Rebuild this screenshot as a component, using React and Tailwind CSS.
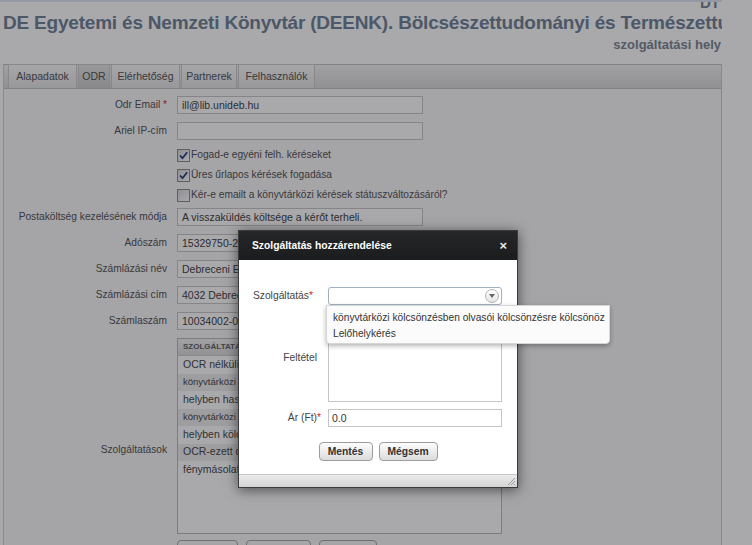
import React from 'react';

const tabs = [
  { label: 'Alapadatok', w: 'w-[69px]' },
  { label: 'ODR', w: 'w-[32px]', active: true },
  { label: 'Elérhetőség', w: 'w-[69px]' },
  { label: 'Partnerek', w: 'w-[56px]' },
  { label: 'Felhasználók', w: 'w-[77px]' },
];

const checks = [
  { label: 'Fogad-e egyéni felh. kéréseket', checked: true },
  { label: 'Üres űrlapos kérések fogadása', checked: true },
  { label: 'Kér-e emailt a könyvtárközi kérések státuszváltozásáról?', checked: false },
];

const billing = [
  { label: 'Adószám', value: '15329750-2-09' },
  { label: 'Számlázási név', value: 'Debreceni Egyetem Egyetemi és Nemzeti Könyvtár' },
  { label: 'Számlázási cím', value: '4032 Debrecen, Egyetem tér 1.' },
  { label: 'Számlaszám', value: '10034002-00282871-00000000' },
];

const services = [
  'OCR nélküli digitalizálás',
  'könyvtárközi kölcsönzés',
  'helyben használat',
  'könyvtárközi másolat',
  'helyben kölcsönzés',
  'OCR-ezett digitalizálás',
  'fénymásolat',
];

const Field = ({ label, required, value, className = 'mb-[8px]' }) => (
  <div className={`flex items-center h-[18px] ${className}`}>
    <div className="w-[163px] text-right text-[10.2px] text-[#555] whitespace-nowrap">
      {label}
      {required && <span className="text-[#d42a2a]"> *</span>}
    </div>
    <div className="ml-[10px] w-[246px] h-[18px] border border-[#c9c9c9] bg-white px-[4px] text-[10.5px] leading-[16px] text-[#444] overflow-hidden whitespace-nowrap">
      {value}
    </div>
  </div>
);

const CheckBox = ({ checked }) => (
  <span className="w-[13px] h-[13px] shrink-0 border border-[#8e8f90] bg-gradient-to-br from-[#d8d9db] to-white flex items-center justify-center">
    {checked && (
      <svg width="11" height="11" viewBox="0 0 11 11">
        <path d="M2 5.5 L4.5 8.2 L9.2 2.2" fill="none" stroke="#28457d" strokeWidth="1.8" />
      </svg>
    )}
  </span>
);

export default function App() {
  return (
    <div className="relative w-[752px] h-[545px] overflow-hidden bg-white font-['Liberation_Sans',Arial,sans-serif]">
      <div className="w-[722px] h-full border-t-2 border-[#dce7f1] overflow-hidden">
        {/* Header */}
        <div className="-mt-[7px] h-[16px] text-right text-[15px] leading-[16px] font-bold text-[#768899] pr-[2px]">DT</div>
        <div className="pl-[3px] text-[19px] leading-[24px] tracking-[-0.2px] font-bold text-[#738597] whitespace-nowrap">
          DE Egyetemi és Nemzeti Könyvtár (DEENK). Bölcsészettudományi és Természettudományi Kari Könyvtár
        </div>
        <div className="mt-[2px] text-right text-[13px] leading-[16px] font-bold text-[#7d8894] pr-[1px]">szolgáltatási hely</div>

        {/* Panel */}
        <div className="mt-[11px] ml-[3px] h-[500px] border-l border-r border-[#cfcfcf] bg-[#f9f9f9]">
          <div className="h-[25px] flex items-end gap-[1px] pl-[4px] border-t border-b border-[#c4c4c4] bg-gradient-to-b from-[#f4f4f4] to-[#dadada]">
            {tabs.map((t) => (
              <div
                key={t.label}
                className={`${t.w} h-[24px] flex items-center justify-center text-[10.5px] text-[#555] border-l border-r border-t border-[#cdcdcd] ${
                  t.active ? 'bg-gradient-to-b from-[#e6e6e6] to-[#cfcfcf]' : 'bg-gradient-to-b from-[#fbfbfb] to-[#e6e6e6]'
                }`}
              >
                {t.label}
              </div>
            ))}
          </div>

          <div className="pt-[7px]">
            <Field label="Odr Email" required value="ill@lib.unideb.hu" />
            <Field label="Ariel IP-cím" value="" className="mb-[5px]" />
            {checks.map((c) => (
              <div key={c.label} className="h-[20px] flex items-center pl-[173px] text-[10.2px] text-[#555]">
                <CheckBox checked={c.checked} />
                <span className="ml-[1px] whitespace-nowrap">{c.label}</span>
              </div>
            ))}
            <Field label="Postaköltség kezelésének módja" value="A visszaküldés költsége a kérőt terheli." className="mt-[3px] mb-[8px]" />
            {billing.map((b) => (
              <Field key={b.label} label={b.label} value={b.value} />
            ))}

            <div className="flex items-center">
              <div className="w-[163px] text-right text-[10.2px] text-[#555]">Szolgáltatások</div>
              <div className="ml-[10px]">
                <div className="w-[325px] h-[196px] border border-[#bdbdbd] bg-white overflow-hidden">
                  <div className="h-[17px] flex items-center px-[5px] text-[8px] font-bold text-[#666] bg-gradient-to-b from-[#f3f3f3] to-[#dedede] border-b border-[#cfcfcf]">
                    <span className="w-[200px]">SZOLGÁLTATÁS</span>
                    <span className="w-[70px]">FELTÉTEL</span>
                    <span>ÁR</span>
                  </div>
                  {services.map((s, i) => (
                    <div
                      key={i}
                      className={`h-[17.5px] flex items-center px-[5px] whitespace-nowrap text-[#4a4a4a] ${
                        s.startsWith('könyvtárközi') ? 'text-[9.5px]' : 'text-[10.5px]'
                      } ${i % 2 === 1 ? 'bg-[#eeeeee]' : 'bg-white'}`}
                    >
                      {s}
                    </div>
                  ))}
                </div>
                <div className="mt-[6px] flex gap-[8px]">
                  {['Hozzáadás', 'Módosítás', 'Törlés'].map((b, i) => (
                    <div
                      key={b}
                      className={`${i === 0 ? 'w-[61px]' : i === 1 ? 'w-[65px]' : 'w-[58px]'} h-[22px] rounded-[4px] border border-[#a8a8a8] bg-gradient-to-b from-[#fdfdfd] to-[#e0e0e0] flex items-center justify-center text-[10.5px] font-bold text-[#444]`}
                    >
                      {b}
                    </div>
                  ))}
                </div>
              </div>
            </div>
          </div>
        </div>
      </div>

      {/* Dim overlay */}
      <div className="absolute inset-0 bg-[rgba(3,4,12,0.34)]" />

      {/* Modal */}
      <div className="absolute left-[238px] top-[230px] w-[280px] h-[258px] flex flex-col bg-white border border-[#3a3b3d] shadow-[0_2px_12px_rgba(0,0,0,0.55)]">
        <div className="h-[29px] flex items-center justify-between pl-[13px] pr-[10px] bg-gradient-to-b from-[#262729] to-[#1b1c1e]">
          <span className="text-[10.3px] font-bold text-white">Szolgáltatás hozzárendelése</span>
          <span className="text-[13px] font-bold text-[#e8e8e8] leading-none">×</span>
        </div>

        <div className="flex-1 pt-[27px]">
          <div className="flex items-center h-[18px]">
            <div className="w-[74px] text-right text-[10.3px] text-[#444] whitespace-nowrap">
              Szolgáltatás<span className="text-[#d42a2a]">*</span>
            </div>
            <div className="ml-[15px] w-[174px] h-[18px] rounded-[3px] border border-[#9fb0c2] bg-white flex items-center justify-end pr-[2px]">
              <span className="w-[14px] h-[14px] rounded-full border border-[#b4b4b4] bg-gradient-to-b from-white to-[#e4e4e4] flex items-center justify-center">
                <svg width="6" height="4" viewBox="0 0 6 4">
                  <path d="M0 0 L6 0 L3 4 Z" fill="#666" />
                </svg>
              </span>
            </div>
          </div>

          <div className="flex items-center mt-[9px]">
            <div className="w-[78px] text-right text-[10.3px] text-[#444]">Feltétel</div>
            <div className="ml-[11px] w-[174px] h-[88px] border border-[#c4c4c4] bg-white" />
          </div>

          <div className="flex items-center h-[18px] mt-[7px]">
            <div className="w-[82px] text-right text-[10.3px] text-[#444] whitespace-nowrap">
              Ár (Ft)<span className="text-[#d42a2a]">*</span>
            </div>
            <div className="ml-[7px] w-[174px] h-[18px] border border-[#c4c4c4] bg-white px-[3px] text-[10.5px] leading-[16px] text-[#333]">
              0.0
            </div>
          </div>

          <div className="mt-[15px] flex justify-center gap-[6px]">
            <div className="w-[54px] h-[19px] rounded-[4px] border border-[#9c9c9c] bg-gradient-to-b from-[#fdfdfd] to-[#dcdcdc] flex items-center justify-center text-[10.3px] font-bold text-[#333]">
              Mentés
            </div>
            <div className="w-[59px] h-[19px] rounded-[4px] border border-[#9c9c9c] bg-gradient-to-b from-[#fdfdfd] to-[#dcdcdc] flex items-center justify-center text-[10.3px] font-bold text-[#333]">
              Mégsem
            </div>
          </div>
        </div>

        <div className="h-[13px] flex items-end justify-end border-t border-[#c9c9c9] bg-gradient-to-b from-[#ececec] to-[#d4d4d4]">
          <svg width="10" height="10" viewBox="0 0 10 10" className="mb-[1px] mr-[1px]">
            <path d="M9 2 L2 9 M9 5 L5 9 M9 8 L8 9" stroke="#9a9a9a" strokeWidth="1" />
          </svg>
        </div>

        {/* Dropdown list */}
        <div className="absolute left-[87px] top-[74px] w-[284px] h-[39px] pt-[4px] rounded-b-[4px] bg-[#fbfbfc] border border-[#d6d6d6] shadow-[0_2px_5px_rgba(0,0,0,0.3)] text-[10.2px] leading-[16px] text-[#333]">
          <div className="px-[6px] whitespace-nowrap">könyvtárközi kölcsönzésben olvasói kölcsönzésre kölcsönöz</div>
          <div className="px-[6px]">Lelőhelykérés</div>
        </div>
      </div>
    </div>
  );
}
